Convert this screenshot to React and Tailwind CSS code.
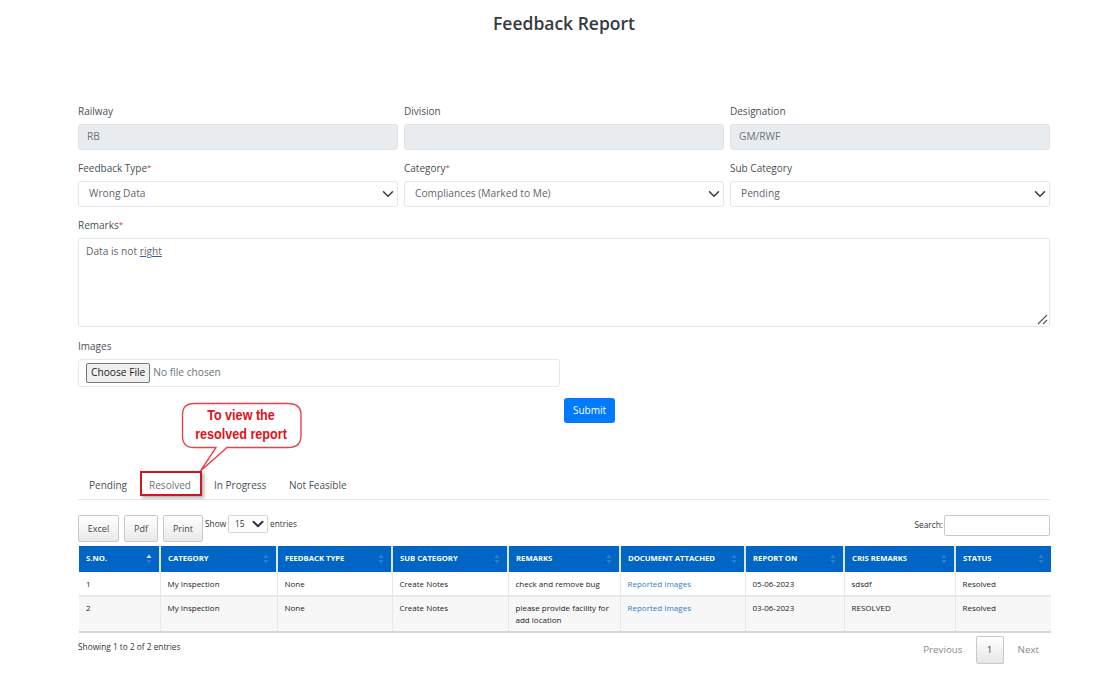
import React from "react";

const font = { fontFamily: '"Open Sans", "Noto Sans", sans-serif' };

function Chevron({ size = 12, w = 2 }) {
  return (
    <svg width={size} height={size} viewBox="0 0 16 16" fill="none" stroke="#343a40" strokeWidth={w} strokeLinecap="round" strokeLinejoin="round">
      <path d="M2 5l6 6 6-6" />
    </svg>
  );
}

function Field({ label, req, children, className = "" }) {
  return (
    <div className={`flex flex-col ${className}`}>
      <div className="h-[13px] pb-[2px] flex items-center text-[10px] leading-none text-[#4a4f54]">
        {label}
        {req && <span className="text-[#dc3545] text-[8px] -mt-[2px]">*</span>}
      </div>
      <div className="mt-[6px]">{children}</div>
    </div>
  );
}

function Disabled({ value }) {
  return (
    <div className="h-[26px] rounded-[3px] border border-[#e1e4e7] bg-[#e9ecef] pl-[8px] flex items-center text-[10.2px] text-[#6c757d]">
      {value}
    </div>
  );
}

function Select({ value }) {
  return (
    <div className="h-[26px] rounded-[3px] border border-[#e4e6e9] bg-white pl-[10px] pr-[3px] flex items-center justify-between text-[10.2px] text-[#5f666c]">
      <span>{value}</span>
      <Chevron />
    </div>
  );
}

function SortIcon({ active }) {
  return (
    <svg width="6" height="10" viewBox="0 0 6 10" className="shrink-0">
      <path d="M3 0.5L5.6 4H0.4z" fill={active ? "#cfe2f7" : "#2f7fd0"} />
      <path d="M3 9.5L5.6 6H0.4z" fill="#2f7fd0" />
    </svg>
  );
}

const cols = [81, 117, 115, 116, 112, 125, 99, 111, 96];
const heads = ["S.NO.", "CATEGORY", "FEEDBACK TYPE", "SUB CATEGORY", "REMARKS", "DOCUMENT ATTACHED", "REPORT ON", "CRIS REMARKS", "STATUS"];
const rows = [
  ["1", "My Inspection", "None", "Create Notes", "check and remove bug", "Reported Images", "05-06-2023", "sdsdf", "Resolved"],
  ["2", "My Inspection", "None", "Create Notes", "please provide facility for add location", "Reported Images", "03-06-2023", "RESOLVED", "Resolved"],
];

function DtButton({ children, className = "" }) {
  return (
    <div className={`h-[27px] rounded-[2px] border border-[#c9c9c9] bg-[linear-gradient(#ffffff,#e9e9e9)] flex items-center justify-center text-[9px] text-[#444] ${className}`}>
      {children}
    </div>
  );
}

export default function App() {
  return (
    <div style={font} className="relative w-[1105px] h-[682px] bg-white overflow-hidden">
      <h1 className="pt-[11px] pl-[23px] h-[105px] text-center text-[17.5px] leading-[24px] font-semibold text-[#343a40]">Feedback Report</h1>

      <div className="ml-[78px] w-[972px]">
        <div className="grid grid-cols-3 gap-x-[6px] gap-y-[12px]">
          <Field label="Railway"><Disabled value="RB" /></Field>
          <Field label="Division"><Disabled value="" /></Field>
          <Field label="Designation"><Disabled value="GM/RWF" /></Field>
          <Field label="Feedback Type" req><Select value="Wrong Data" /></Field>
          <Field label="Category" req><Select value="Compliances (Marked to Me)" /></Field>
          <Field label="Sub Category"><Select value="Pending" /></Field>
        </div>

        <Field label="Remarks" req className="mt-[12px]">
          <div className="relative h-[89px] rounded-[3px] border border-[#e4e6e9] bg-white pl-[7px] pt-[5px] text-[10.2px] leading-[14px] text-[#5f666c]">
            Data is not <span className="underline decoration-[#3b5aa8]">right</span>
            <svg className="absolute right-[1px] bottom-[1px]" width="11" height="11" viewBox="0 0 11 11" stroke="#555" strokeWidth="1.1" fill="none">
              <path d="M1 10L10 1M6 10L10 6" />
            </svg>
          </div>
        </Field>

        <Field label="Images" className="mt-[13px]">
          <div className="h-[28px] w-[482px] rounded-[3px] border border-[#e4e6e9] bg-white pl-[7px] flex items-center gap-[3px] text-[10.2px] text-[#6c757d]">
            <span className="h-[20px] px-[4px] flex items-center rounded-[2px] border border-[#777] bg-[#efefef] text-[#222]">Choose File</span>
            No file chosen
          </div>
        </Field>

        <div className="mt-[11px] ml-[486px] w-[51px] h-[25px] rounded-[3px] bg-[#007bff] text-white text-[10px] flex items-center justify-center">Submit</div>

        <div className="mt-[49px] h-[28px] flex items-center border-b border-[#e4e6e9] text-[10px] text-[#495057]">
          <span className="ml-[11px] w-[49px]">Pending</span>
          <span className="w-[64px] text-center text-[#6c757d]">Resolved</span>
          <span className="ml-[12px] w-[75px]">In Progress</span>
          <span>Not Feasible</span>
        </div>

        <div className="mt-[15px] flex items-start">
          <DtButton className="w-[41px]">Excel</DtButton>
          <DtButton className="ml-[5px] w-[34px]">Pdf</DtButton>
          <DtButton className="ml-[5px] w-[40px]">Print</DtButton>
          <div className="ml-[2px] flex items-center text-[8.3px] text-[#333]">
            Show
            <div className="mx-[2px] w-[40px] h-[18px] rounded-[2px] border border-[#d5d5d5] pl-[6px] pr-[3px] flex items-center justify-between">
              15 <Chevron size={12} w={2.8} />
            </div>
            entries
          </div>
          <div className="ml-auto flex items-center text-[8.3px] font-medium text-[#333]">
            Search:
            <div className="ml-[1px] w-[106px] h-[21px] rounded-[2px] border border-[#c9c9c9] bg-white" />
          </div>
        </div>

        <table className="mt-[4px] ml-[1px] w-[972px] table-fixed border-collapse text-[8px] font-medium text-[#222] border-b-2 border-[#d5d8da]">
          <colgroup>
            {cols.map((w, i) => <col key={i} style={{ width: w }} />)}
          </colgroup>
          <thead>
            <tr className="h-[26px] bg-[#0065c4] text-white">
              {heads.map((h, i) => (
                <th key={h} className="px-[7px] text-[7.7px] font-bold text-left border-r-2 border-[#d8e8f6] last:border-r-0">
                  <div className="flex items-center justify-between">
                    <span>{h}</span>
                    <SortIcon active={i === 0} />
                  </div>
                </th>
              ))}
            </tr>
          </thead>
          <tbody>
            {rows.map((r, ri) => (
              <tr key={ri} className={ri ? "h-[36px] bg-[#f7f7f7] align-top border-t-2 border-[#e6e8ea]" : "h-[24px] bg-white"}>
                {r.map((c, i) => (
                  <td key={i} className={`px-[7px] leading-[12px] border-r border-[#e6e8ea] last:border-r-0 ${ri ? "pt-[5px]" : ""} ${i === 5 ? "text-[#2f7fc4]" : ""}`}>{c}</td>
                ))}
              </tr>
            ))}
          </tbody>
        </table>

        <div className="mt-[3px] flex items-start justify-between">
          <div className="pt-[5px] text-[8.3px] leading-[12px] font-medium text-[#333]">Showing 1 to 2 of 2 entries</div>
          <div className="flex items-center text-[9.8px] text-[#8a8a8a]">
            <span>Previous</span>
            <span className="ml-[13px] w-[28px] h-[28px] rounded-[2px] border border-[#c9c9c9] bg-[linear-gradient(#ffffff,#e6e6e6)] flex items-center justify-center text-[#444]">1</span>
            <span className="ml-[14px] mr-[11px]">Next</span>
          </div>
        </div>
      </div>

      {/* red highlight over the Resolved tab */}
      <div className="absolute left-[140px] top-[471px] w-[62px] h-[25px] border-2 border-[#d0161e] shadow-[2px_2px_3px_rgba(0,0,0,0.3)]" />

      {/* callout */}
      <svg className="absolute left-[180px] top-[401px]" width="124" height="72" viewBox="0 0 124 72" fill="white" stroke="#e8434b" strokeWidth="1.4">
        <path d="M14 2.5H108Q121 2.5 121 14V35Q121 46.5 108 46.5H47L20.5 70L36 46.5H14Q2.5 46.5 2.5 35V14Q2.5 2.5 14 2.5Z" />
      </svg>
      <div className="absolute left-[181px] top-[406px] w-[120px] text-center text-[14px] leading-[19px] font-bold text-[#e0111b] scale-x-[0.9]" style={{ fontFamily: '"Liberation Sans", sans-serif' }}>
        To view the<br />resolved report
      </div>
    </div>
  );
}
